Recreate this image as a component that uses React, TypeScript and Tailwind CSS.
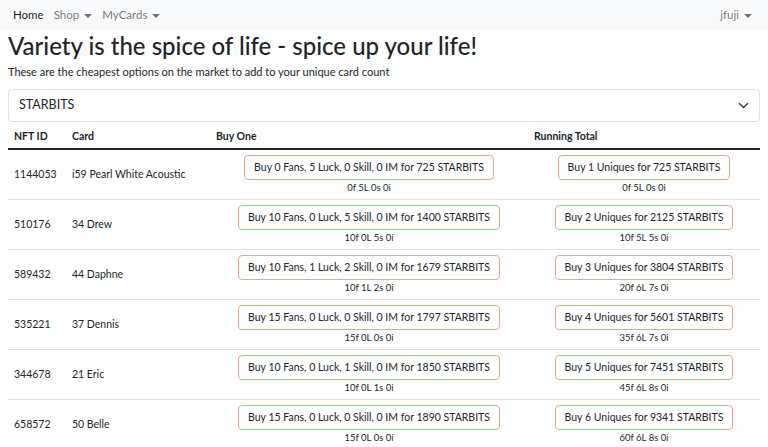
import React from "react";

type Row = {
  id: string;
  card: string;
  fans: number;
  luck: number;
  skill: number;
  im: number;
  price: number;
  one: string;
  count: number;
  total: number;
  sum: string;
};

const rows: Row[] = [
  { id: "1144053", card: "i59 Pearl White Acoustic", fans: 0, luck: 5, skill: 0, im: 0, price: 725, one: "0f 5L 0s 0i", count: 1, total: 725, sum: "0f 5L 0s 0i" },
  { id: "510176", card: "34 Drew", fans: 10, luck: 0, skill: 5, im: 0, price: 1400, one: "10f 0L 5s 0i", count: 2, total: 2125, sum: "10f 5L 5s 0i" },
  { id: "589432", card: "44 Daphne", fans: 10, luck: 1, skill: 2, im: 0, price: 1679, one: "10f 1L 2s 0i", count: 3, total: 3804, sum: "20f 6L 7s 0i" },
  { id: "535221", card: "37 Dennis", fans: 15, luck: 0, skill: 0, im: 0, price: 1797, one: "15f 0L 0s 0i", count: 4, total: 5601, sum: "35f 6L 7s 0i" },
  { id: "344678", card: "21 Eric", fans: 10, luck: 0, skill: 1, im: 0, price: 1850, one: "10f 0L 1s 0i", count: 5, total: 7451, sum: "45f 6L 8s 0i" },
  { id: "658572", card: "50 Belle", fans: 15, luck: 0, skill: 0, im: 0, price: 1890, one: "15f 0L 0s 0i", count: 6, total: 9341, sum: "60f 6L 8s 0i" },
];

function Caret() {
  return <span className="inline-block ml-[5px] align-middle border-x-[4px] border-x-transparent border-t-[4px] border-t-current" />;
}

function Cell({ label, sub }: { label: string; sub: string }) {
  return (
    <div className="flex flex-col items-center">
      <button className="border border-[#f6a089] rounded-[4px] px-[9px] h-[25px] text-[10.5px] text-[#212529] bg-white">
        {label}
      </button>
      <span className="text-[9.5px] text-[#212529] mt-[2px] leading-[12px]">{sub}</span>
    </div>
  );
}

export default function App() {
  return (
    <div className="min-h-[447px] bg-white text-[#212529] font-['Lato',sans-serif] text-[11px]">
      <nav className="h-[30px] bg-[#f8f9fa] flex items-center justify-between px-[13px] text-[11.5px]">
        <div className="flex items-center gap-[10px]">
          <span className="text-[rgba(0,0,0,0.9)]">Home</span>
          <span className="text-[rgba(0,0,0,0.55)]">Shop<Caret /></span>
          <span className="text-[rgba(0,0,0,0.55)]">MyCards<Caret /></span>
        </div>
        <span className="text-[rgba(0,0,0,0.55)] mr-[3px]">jfuji<Caret /></span>
      </nav>

      <div className="px-[8px]">
        <h1 className="text-[24px] font-medium leading-[30px] mt-[1px] mb-[2px]">
          Variety is the spice of life - spice up your life!
        </h1>
        <p className="leading-[18px] mb-[8px]">
          These are the cheapest options on the market to add to your unique card count
        </p>

        <div className="h-[33px] border border-[#dee2e6] rounded-[4px] flex items-center justify-between px-[10px] text-[12.5px]">
          <span>STARBITS</span>
          <svg width="11" height="11" viewBox="0 0 16 16" fill="none" stroke="#343a40" strokeWidth="2" strokeLinecap="round" strokeLinejoin="round">
            <path d="M2 5l6 6 6-6" />
          </svg>
        </div>

        <div className="mt-[4px] text-[10.5px]">
          <div className="grid grid-cols-[58px_144px_318px_1fr] font-bold h-[24px] items-center border-b-2 border-[#212529]">
            <div className="px-[6px]">NFT ID</div>
            <div className="px-[6px]">Card</div>
            <div className="px-[6px]">Buy One</div>
            <div className="px-[6px]">Running Total</div>
          </div>
          {rows.map((r) => (
            <div key={r.id} className="grid grid-cols-[58px_144px_318px_1fr] h-[50px] items-center border-b border-[#dee2e6]">
              <div className="px-[6px]">{r.id}</div>
              <div className="px-[6px]">{r.card}</div>
              <Cell label={`Buy ${r.fans} Fans, ${r.luck} Luck, ${r.skill} Skill, ${r.im} IM for ${r.price} STARBITS`} sub={r.one} />
              <Cell label={`Buy ${r.count} Uniques for ${r.total} STARBITS`} sub={r.sum} />
            </div>
          ))}
        </div>
      </div>
    </div>
  );
}
